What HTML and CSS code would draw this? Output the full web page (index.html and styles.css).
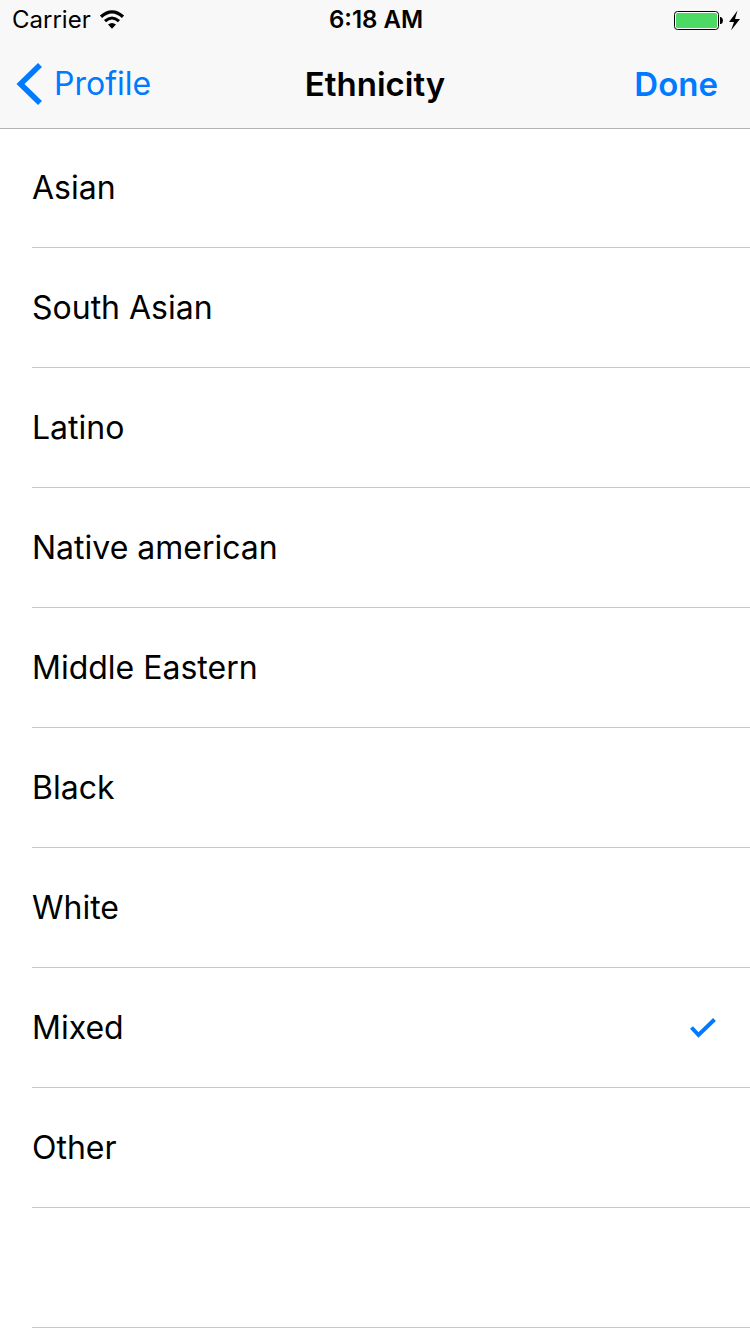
FILE: index.html
```html
<!DOCTYPE html>
<html lang="en">
<head>
<meta charset="utf-8">
<meta name="viewport" content="width=device-width, initial-scale=1">
<title>Ethnicity</title>
<link rel="stylesheet" href="styles.css">
</head>
<body>
<header class="header">
  <div class="status">
    <div class="status-left">
      <span>Carrier</span>
      <svg class="wifi" width="26" height="20" viewBox="0 0 26 20" aria-hidden="true">
        <path d="M2 6.800Q13-3.200 24 6.800" fill="none" stroke="#000" stroke-width="3.200"/>
        <path d="M6 11.200Q13 4.800 20 11.200" fill="none" stroke="#000" stroke-width="3"/>
        <path d="M9 14.600Q13 11.200 17 14.600L13 18.800Z"/>
      </svg>
    </div>
    <span class="time">6:18 AM</span>
    <div class="status-right">
      <svg width="68" height="20" viewBox="0 0 68 20" aria-hidden="true">
        <rect x="2.500" y="1.500" width="44" height="18" rx="3" fill="#fff" stroke="#000"/>
        <rect x="4" y="3" width="41" height="15" rx="1.500" fill="#4cd964"/>
        <path d="M48 7h1q2 1 2 3.500T49 14h-1z"/>
        <path d="M65.500 0.500L57 12h5l-3 8.500L68 9h-5z"/>
      </svg>
    </div>
  </div>
  <nav class="nav">
    <a class="back" href="#profile">
      <svg width="26" height="42" viewBox="0 0 26 42" aria-hidden="true">
        <path d="M24 2L4.500 21L24 40" fill="none" stroke="#007aff" stroke-width="5.600"/>
      </svg>
      <span>Profile</span>
    </a>
    <h1 class="title">Ethnicity</h1>
    <button class="done" type="button">Done</button>
  </nav>
</header>
<main class="list" role="radiogroup" aria-label="Ethnicity">
  <label class="row"><input class="choice" type="radio" name="ethnicity"><span class="name">Asian</span><svg class="tick" viewBox="0 0 26 20"><path d="M1.500 9.500L8.500 17L24.500 1.500"/></svg></label>
  <label class="row"><input class="choice" type="radio" name="ethnicity"><span class="name">South Asian</span><svg class="tick" viewBox="0 0 26 20"><path d="M1.500 9.500L8.500 17L24.500 1.500"/></svg></label>
  <label class="row"><input class="choice" type="radio" name="ethnicity"><span class="name">Latino</span><svg class="tick" viewBox="0 0 26 20"><path d="M1.500 9.500L8.500 17L24.500 1.500"/></svg></label>
  <label class="row"><input class="choice" type="radio" name="ethnicity"><span class="name">Native american</span><svg class="tick" viewBox="0 0 26 20"><path d="M1.500 9.500L8.500 17L24.500 1.500"/></svg></label>
  <label class="row"><input class="choice" type="radio" name="ethnicity"><span class="name">Middle Eastern</span><svg class="tick" viewBox="0 0 26 20"><path d="M1.500 9.500L8.500 17L24.500 1.500"/></svg></label>
  <label class="row"><input class="choice" type="radio" name="ethnicity"><span class="name">Black</span><svg class="tick" viewBox="0 0 26 20"><path d="M1.500 9.500L8.500 17L24.500 1.500"/></svg></label>
  <label class="row"><input class="choice" type="radio" name="ethnicity"><span class="name">White</span><svg class="tick" viewBox="0 0 26 20"><path d="M1.500 9.500L8.500 17L24.500 1.500"/></svg></label>
  <label class="row"><input class="choice" type="radio" name="ethnicity" checked><span class="name">Mixed</span><svg class="tick" viewBox="0 0 26 20"><path d="M1.500 9.500L8.500 17L24.500 1.500"/></svg></label>
  <label class="row"><input class="choice" type="radio" name="ethnicity"><span class="name">Other</span><svg class="tick" viewBox="0 0 26 20"><path d="M1.500 9.500L8.500 17L24.500 1.500"/></svg></label>
  <div class="row"></div>
</main>
</body>
</html>
```
FILE: styles.css
```css
* {
  box-sizing: border-box;
}

body {
  margin: 0;
  background: #fff;
  color: #000;
  font-family: Inter, "Liberation Sans", sans-serif;
  font-size: 32px;
  line-height: 40px;
}

.header {
  background: #f8f8f8;
  box-shadow: 0 1px #b2b2b2;
}

.status,
.nav {
  display: grid;
  grid-template-columns: 1fr auto 1fr;
  align-items: center;
}

.status {
  padding: 0 10px 0 12px;
  font-size: 24px;
}

.status-left {
  display: flex;
  align-items: center;
  gap: 8px;
}

.time {
  font-weight: 600;
}

.status-right {
  display: flex;
  justify-content: flex-end;
}

.nav {
  height: 88px;
  padding: 0 16px;
}

.back {
  display: flex;
  align-items: center;
  gap: 12px;
  color: #007aff;
  text-decoration: none;
}

.title {
  margin: 0;
  font-size: 33px;
  font-weight: 600;
}

.done {
  justify-self: end;
  margin-right: 16px;
  padding: 0;
  border: 0;
  background: none;
  color: #007aff;
  font: inherit;
  font-size: 33px;
  font-weight: 600;
}

.list {
  padding-left: 32px;
}

.row {
  display: flex;
  align-items: center;
  justify-content: space-between;
  height: 120px;
  padding-right: 34px;
  border-bottom: 1px solid #c8c7cc;
}

.choice {
  position: absolute;
  appearance: none;
  margin: 0;
}

.tick {
  display: none;
  width: 26px;
  height: 20px;
  fill: none;
  stroke: #007aff;
  stroke-width: 4;
}

.choice:checked ~ .tick {
  display: block;
}
```
